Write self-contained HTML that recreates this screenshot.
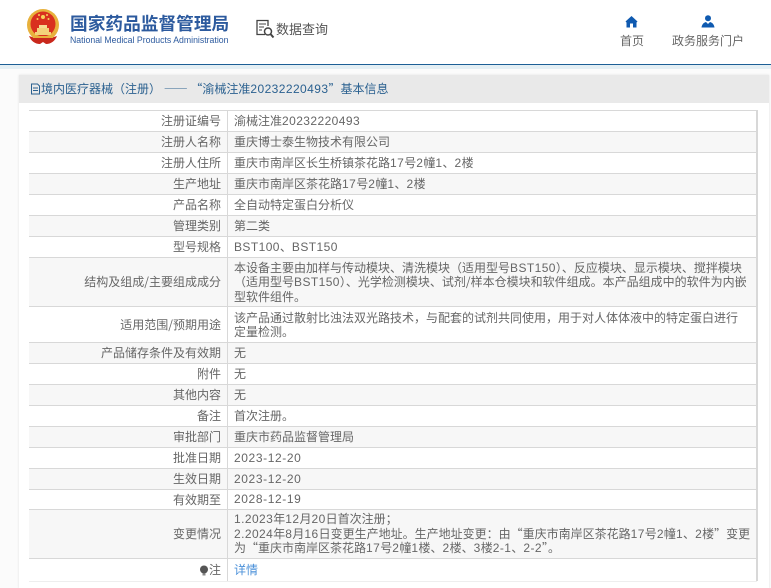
<!DOCTYPE html>
<html lang="zh-CN">
<head>
<meta charset="utf-8">
<title>国家药品监督管理局</title>
<style>
html,body{margin:0;padding:0;background:#fff}
body{width:771px;height:588px;position:relative;overflow:hidden;font-family:"Noto Sans CJK SC","Liberation Sans",sans-serif;font-size:12px;color:#666}
.a{position:absolute;white-space:nowrap}
.n{font-family:"Liberation Sans","Noto Sans CJK SC",sans-serif;letter-spacing:.42px}
.d{letter-spacing:.6px}
#top{left:0;top:0;width:771px;height:64px;background:#fff}
#line{left:0;top:64px;width:771px;height:1px;background:#1d5f96}
#tex{left:0;top:65px;width:771px;height:4px;background:#e4eff4}
#bg{left:0;top:69px;width:771px;height:519px;background:#fbfbfb}
#panel{left:19px;top:75px;width:750px;height:513px;background:#fff;box-shadow:0 0 2px #ddd}
#phead{left:19px;top:75px;width:750px;height:28px;background:#e9e9e9}
#ptitle{left:30px;top:75px;height:28px;line-height:28px;color:#2b6190;font-size:12px}
.row{position:absolute;left:29px;width:728px;box-sizing:border-box;border-bottom:1px solid #d8d8d8}
.row.alt{background:#f7f7f7}
.row .l{position:absolute;left:0;top:0;bottom:0;border-right:1px solid #d8d8d8;display:flex;align-items:center;justify-content:flex-end;padding-right:6px;box-sizing:border-box;width:199px;line-height:14px}
.row .v{position:absolute;left:205px;right:0;top:0;bottom:0;display:flex;align-items:center;line-height:13.5px;white-space:nowrap}
#tt{position:absolute;left:29px;top:110px;width:728px;height:1px;background:#d8d8d8}
#rb{position:absolute;left:756px;top:110px;width:2px;height:471px;background:#d8d8d8}
</style>
</head>
<body>
<div class="a" id="top"></div>
<div class="a" id="line"></div>
<div class="a" id="tex"></div>
<div class="a" id="bg"></div>
<div class="a" id="panel"></div>
<div class="a" id="phead"></div>

<svg class="a" style="left:26px;top:9px" width="34" height="36" viewBox="0 0 34 36">
<circle cx="17" cy="16" r="16" fill="#e8b13c"/>
<circle cx="17" cy="15" r="12.5" fill="#d9301f"/>
<path d="M9 23h16v3H9z" fill="#f3d27a"/>
<path d="M11 19h12v4H11z" fill="#f3d27a"/>
<path d="M13 16h8v3h-8z" fill="#f6dc93"/>
<circle cx="17" cy="8" r="2" fill="#f5d35a"/>
<circle cx="11.5" cy="10" r="1" fill="#f5d35a"/>
<circle cx="22.500" cy="10" r="1" fill="#f5d35a"/>
<circle cx="13" cy="6" r="1" fill="#f5d35a"/>
<circle cx="21" cy="6" r="1" fill="#f5d35a"/>
<path d="M3 27c2 5 6 8 11 8l3-2 3 2c5 0 9-3 11-8l-6 2H9z" fill="#c9281c"/>
<path d="M7 27h20v2H7z" fill="#e8b13c"/>
</svg>

<div class="a" style="left:70px;top:12px;font-size:17.7px;line-height:22px;font-weight:700;color:#2c5a9e">国家药品监督管理局</div>
<div class="a" style="left:70px;top:34px;font-family:'Liberation Sans',sans-serif;font-size:8.72px;line-height:12px;color:#2c5a9e">National Medical Products Administration</div>

<svg class="a" style="left:255px;top:19px" width="22" height="22" viewBox="0 0 22 22" fill="none" stroke="#444">
<path d="M10 15.500H2V1.500H13V7" stroke-width="1.300"/>
<path d="M4 5h7M4 8h5M4 11h3" stroke-width="1.100"/>
<circle cx="13" cy="12.500" r="3.500" stroke-width="1.500"/>
<path d="M15.500 15l3 3.500" stroke-width="2"/>
</svg>
<div class="a" style="left:276px;top:19px;font-size:13px;line-height:19px;color:#555">数据查询</div>

<svg class="a" style="left:625px;top:15px" width="13" height="13" viewBox="0 0 13 13"><path d="M6.500 1L0.500 6.500 1.500 7.500V12.500H5V8.500H8V12.500H11.500V7.500L12.500 6.500Z" fill="#0f5ab0"/></svg>
<svg class="a" style="left:701px;top:15px" width="14" height="13" viewBox="0 0 14 13"><circle cx="7" cy="3.300" r="3" fill="#0f5ab0"/><path d="M0.500 12.500C1 9 3 7.500 5 7L7 9 9 7C11 7.500 13 9 13.500 12.500Z" fill="#0f5ab0"/></svg>
<div class="a" style="left:620px;top:32px;font-size:12px;line-height:17px;color:#666">首页</div>
<div class="a" style="left:672px;top:32px;font-size:12px;line-height:17px;color:#666">政务服务门户</div>

<div class="a" id="ptitle"><svg style="vertical-align:-2px" width="11" height="12" viewBox="0 0 11 12" fill="none" stroke="#2b6190"><path d="M1.500 1h6l2 2v8h-8zM3 5h5M3 7.500h5"/></svg>境内医疗器械（注册） —— “渝械注准<span class="n">20232220493</span>”基本信息</div>

<div id="tt"></div>
<div class="row" style="top:111px;height:21px"><div class="l">注册证编号</div><div class="v"><div>渝械注准<span class="n">20232220493</span></div></div></div>
<div class="row alt" style="top:132px;height:21px"><div class="l">注册人名称</div><div class="v">重庆博士泰生物技术有限公司</div></div>
<div class="row" style="top:153px;height:21px"><div class="l">注册人住所</div><div class="v"><div>重庆市南岸区长生桥镇茶花路<span class="n">17</span>号<span class="n">2</span>幢<span class="n">1</span>、<span class="n">2</span>楼</div></div></div>
<div class="row alt" style="top:174px;height:21px"><div class="l">生产地址</div><div class="v"><div>重庆市南岸区茶花路<span class="n">17</span>号<span class="n">2</span>幢<span class="n">1</span>、<span class="n">2</span>楼</div></div></div>
<div class="row" style="top:195px;height:21px"><div class="l">产品名称</div><div class="v">全自动特定蛋白分析仪</div></div>
<div class="row alt" style="top:216px;height:21px"><div class="l">管理类别</div><div class="v">第二类</div></div>
<div class="row" style="top:237px;height:21px"><div class="l">型号规格</div><div class="v"><div><span class="n">BST100</span>、<span class="n">BST150</span></div></div></div>
<div class="row alt" style="top:258px;height:49px"><div class="l">结构及组成/主要组成成分</div><div class="v"><div>本设备主要由加样与传动模块、清洗模块（适用型号<span class="n">BST150</span>）、反应模块、显示模块、搅拌模块<br>（适用型号<span class="n">BST150</span>）、光学检测模块、试剂/样本仓模块和软件组成。本产品组成中的软件为内嵌<br>型软件组件。</div></div></div>
<div class="row" style="top:307px;height:36px"><div class="l">适用范围/预期用途</div><div class="v"><div>该产品通过散射比浊法双光路技术，与配套的试剂共同使用，用于对人体体液中的特定蛋白进行<br>定量检测。</div></div></div>
<div class="row alt" style="top:343px;height:21px"><div class="l">产品储存条件及有效期</div><div class="v">无</div></div>
<div class="row" style="top:364px;height:21px"><div class="l">附件</div><div class="v">无</div></div>
<div class="row alt" style="top:385px;height:21px"><div class="l">其他内容</div><div class="v">无</div></div>
<div class="row" style="top:406px;height:21px"><div class="l">备注</div><div class="v">首次注册。</div></div>
<div class="row alt" style="top:427px;height:21px"><div class="l">审批部门</div><div class="v">重庆市药品监督管理局</div></div>
<div class="row" style="top:448px;height:21px"><div class="l">批准日期</div><div class="v"><div><span class="n d">2023-12-20</span></div></div></div>
<div class="row alt" style="top:469px;height:21px"><div class="l">生效日期</div><div class="v"><div><span class="n d">2023-12-20</span></div></div></div>
<div class="row" style="top:490px;height:20px"><div class="l">有效期至</div><div class="v"><div><span class="n d">2028-12-19</span></div></div></div>
<div class="row alt" style="top:510px;height:49px"><div class="l">变更情况</div><div class="v"><div><span class="n">1.2023</span>年<span class="n">12</span>月<span class="n">20</span>日首次注册；<br><span class="n">2.2024</span>年<span class="n">8</span>月<span class="n">16</span>日变更生产地址。生产地址变更：由“重庆市南岸区茶花路<span class="n">17</span>号<span class="n">2</span>幢<span class="n">1</span>、<span class="n">2</span>楼”变更<br>为“重庆市南岸区茶花路<span class="n">17</span>号<span class="n">2</span>幢<span class="n">1</span>楼、<span class="n">2</span>楼、<span class="n">3</span>楼<span class="n">2-1</span>、<span class="n">2-2</span>”。</div></div></div>
<div class="row" style="top:559px;height:23px;border-bottom-color:#eee"><div class="l"><svg width="10" height="11" viewBox="0 0 10 11"><circle cx="5" cy="4.500" r="4" fill="#555"/><path d="M3.500 8.500h3v2h-3z" fill="#888"/></svg>注</div><div class="v" style="color:#4a90d9">详情</div></div>
<div id="rb"></div>
</body>
</html>
